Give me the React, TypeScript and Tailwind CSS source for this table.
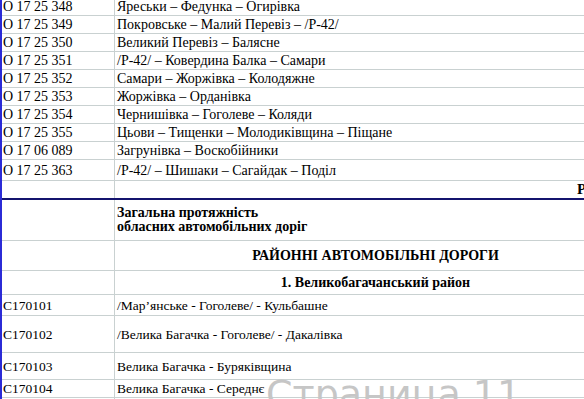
const grid = 'border-[#c9d1d1]';

const roads: [string, string][] = [
  ['О 17 25 348', 'Яреськи – Федунка – Огирівка'],
  ['О 17 25 349', 'Покровське – Малий Перевіз – /Р-42/'],
  ['О 17 25 350', 'Великий Перевіз – Балясне'],
  ['О 17 25 351', '/Р-42/ – Ковердина Балка – Самари'],
  ['О 17 25 352', 'Самари – Жоржівка – Колодяжне'],
  ['О 17 25 353', 'Жоржівка – Орданівка'],
  ['О 17 25 354', 'Чернишівка – Гоголеве – Коляди'],
  ['О 17 25 355', 'Цьови – Тищенки – Молодиківщина – Піщане'],
  ['О 17 06 089', 'Загрунівка – Воскобійники'],
];

function Row({
  h,
  code,
  children,
  border = true,
}: {
  h: string;
  code?: string;
  children?: React.ReactNode;
  border?: boolean;
}) {
  return (
    <div className={`flex ${h} ${border ? `border-b ${grid}` : ''}`}>
      <div className={`flex w-[113px] shrink-0 items-center border-r ${grid} pl-[1px]`}>{code}</div>
      <div className="flex w-[519px] shrink-0 items-center pl-[2px]">{children}</div>
    </div>
  );
}

export default function App() {
  return (
    <div className="relative h-[399px] w-[584px] overflow-hidden bg-white font-['Liberation_Serif',serif] text-black">
      <div className="-mt-[2px] w-[634px] border-l-2 border-[#2b2bd6]">
        <div className="text-[14px] leading-[17px]">
          {roads.map(([code, name]) => (
            <Row key={code} h="h-[18px]" code={code}>
              {name}
            </Row>
          ))}
          <Row h="h-[21px]" code="О 17 25 363">
            /Р-42/ – Шишаки – Сагайдак – Поділ
          </Row>
          <Row h="h-[17px]" border={false}>
            <span className="pl-[460px] text-[15px] font-bold">РАЗОМ</span>
          </Row>
        </div>
        <div className="h-[2px] bg-[#14146e]" />
        <div className="text-[13.5px] leading-[15px]">
          <Row h="h-[41px]">
            <span className="text-[14px] font-bold leading-[14px]">
              Загальна протяжність
              <br />
              обласних автомобільних доріг
            </span>
          </Row>
          <Row h="h-[30px]">
            <span className="w-full text-center text-[14px] font-bold">РАЙОННІ АВТОМОБІЛЬНІ ДОРОГИ</span>
          </Row>
          <Row h="h-[24px]">
            <span className="w-full text-center text-[14px] font-bold">1. Великобагачанський район</span>
          </Row>
          <Row h="h-[21px]" code="С170101">
            /Мар’янське - Гоголеве/ - Кульбашне
          </Row>
          <Row h="h-[37px]" code="С170102">
            /Велика Багачка - Гоголеве/ - Дакалівка
          </Row>
          <Row h="h-[27px]" code="С170103">
            Велика Багачка - Буряківщина
          </Row>
          <Row h="h-[18px]" code="С170104">
            Велика Багачка - Середнє
          </Row>
          <Row h="h-[18px]" />
        </div>
      </div>
      <div className="absolute left-[266px] top-[375px] font-['DejaVu_Sans',sans-serif] text-[38px] leading-none text-[#c6c6c6]">
        Страница 11
      </div>
    </div>
  );
}
